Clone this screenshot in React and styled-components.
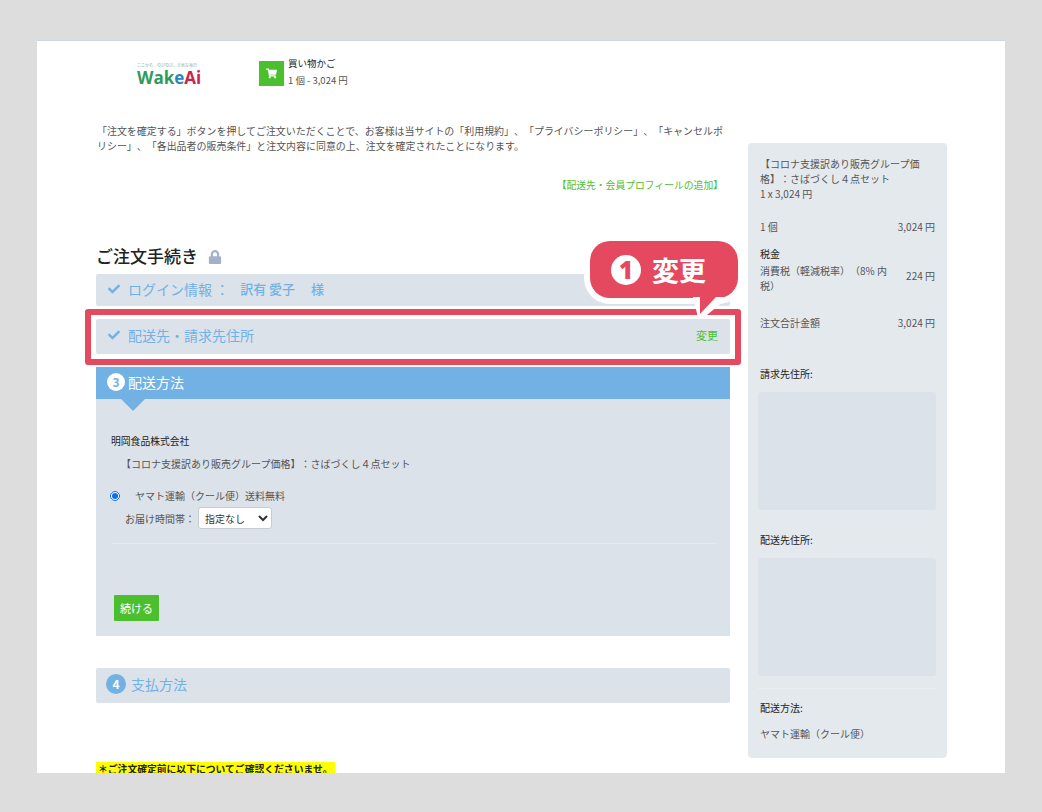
import { createGlobalStyle, styled } from "styled-components";
import { FaCheck, FaLock, FaShoppingCart } from "react-icons/fa";

const GlobalStyle = createGlobalStyle`
    html, body {
        margin: 0;
        padding: 0;
        background: #dddddd;
    }
    body {
        font-family: "Noto Sans CJK JP", "Noto Sans", sans-serif;
        font-size: 10px;
        color: #555;
        text-spacing-trim: space-all;
    }
    p, h1, h2, h3 {
        margin: 0;
        font-weight: 400;
    }
`;

const Sheet = styled.div`
    width: 968px;
    height: 733px;
    margin: 40px 0 39px 37px;
    padding-left: 59px;
    box-sizing: border-box;
    background: #fff;
    border-top: 1px solid #ccd6dd;
    overflow: hidden;
    display: flex;
    align-items: flex-start;
    gap: 18px;
`;

const Main = styled.div`
    width: 634px;
    flex-shrink: 0;
`;

const Header = styled.div`
    display: flex;
    align-items: flex-start;
    padding-top: 20px;
    height: 62px;
`;

const Logo = styled.div`
    width: 163px;
    padding: 2px 0 0 41px;
    box-sizing: border-box;
    .tag {
        display: block;
        height: 6px;
        font-size: 4px;
        line-height: 5px;
        color: #8a9;
        white-space: nowrap;
    }
    .name {
        display: block;
        font-family: "Open Sans", sans-serif;
        font-size: 17px;
        line-height: 18px;
        font-weight: 700;
        color: #2f9b5c;
    }
    .e { color: #2a86c0; }
    .ai { color: #c9264f; }
`;

const CartIcon = styled.div`
    width: 25px;
    height: 25px;
    background: #4cbf2f;
    color: #fff;
    display: flex;
    align-items: center;
    justify-content: center;
    font-size: 11px;
`;

const CartText = styled.div`
    margin-left: 4px;
    margin-top: -6px;
    font-size: 9.5px;
    line-height: 17px;
    strong {
        display: block;
        font-weight: 400;
        color: #222;
    }
`;

const Notice = styled.p`
    font-size: 9.96px;
    line-height: 15px;
    padding-left: 1px;
    width: 632px;
`;

const ProfileLink = styled.a`
    display: block;
    margin-top: 25px;
    padding-right: 7px;
    text-align: right;
    font-size: 9.8px;
    line-height: 15px;
    color: #4cbf2f;
`;

const Title = styled.h1`
    display: flex;
    align-items: center;
    gap: 10px;
    margin-top: 50px;
    height: 25px;
    font-size: 17px;
    line-height: 25px;
    font-weight: 500 !important;
    color: #222;
    svg {
        color: #a3b2c7;
        font-size: 14px;
        margin-top: 3px;
    }
`;

const Row = styled.div`
    position: relative;
    display: flex;
    align-items: center;
    box-sizing: border-box;
    height: ${(p) => p.$height}px;
    margin-top: ${(p) => p.$top}px;
    padding: 0 12px 3px;
    background: #dce2ea;
    border-radius: 2px;
    color: #72b1e4;
    font-size: 14px;
    svg {
        font-size: 12px;
        margin-right: 8px;
    }
    em {
        font-style: normal;
        font-weight: 500;
        font-size: 13px;
        margin-left: 11px;
    }
`;

const ChangeLink = styled.a`
    margin-left: auto;
    color: #4cbf2f;
    font-size: 11px;
`;

const Highlight = styled.div`
    position: absolute;
    left: -11px;
    right: -11px;
    top: -10px;
    bottom: -11px;
    border: 6px solid #e5495f;
    border-radius: 3px;
    pointer-events: none;
`;

const Callout = styled.div`
    position: absolute;
    right: -8px;
    top: -78px;
    width: 148px;
    height: 57px;
    box-sizing: border-box;
    padding-left: 21px;
    display: flex;
    align-items: center;
    gap: 11px;
    background: #e5495f;
    border-radius: 20px;
    box-shadow: 0 0 0 6px #fff;
    color: #fff;
    font-size: 27px;
    font-weight: 700;
    z-index: 2;
    &::before,
    &::after {
        content: "";
        position: absolute;
    }
    &::before {
        left: 103px;
        top: 56px;
        width: 36px;
        height: 22px;
        background: #fff;
        clip-path: polygon(0 0, 100% 0, 25% 100%, 15% 100%);
    }
    &::after {
        left: 110px;
        top: 56px;
        width: 16px;
        height: 17px;
        background: #e5495f;
        clip-path: polygon(0 0, 100% 0, 0 100%);
    }
`;

const CalloutNumber = styled.span`
    width: 30px;
    height: 30px;
    border-radius: 50%;
    background: #fff;
    color: #e5495f;
    font-family: "Open Sans", sans-serif;
    font-size: 24px;
    line-height: 30px;
    font-weight: 800;
    text-align: center;
`;

const StepHeader = styled.div`
    position: relative;
    display: flex;
    align-items: center;
    box-sizing: border-box;
    height: 32px;
    margin-top: 13px;
    padding: 0 0 3px 11px;
    background: #72b1e4;
    color: #fff;
    font-size: 14px;
    &::after {
        content: "";
        position: absolute;
        left: 25px;
        bottom: -12px;
        border-style: solid;
        border-width: 12px 12px 0;
        border-color: #72b1e4 transparent transparent;
    }
`;

const StepNumber = styled.span`
    width: ${(p) => (p.$muted ? 20 : 18)}px;
    height: ${(p) => (p.$muted ? 20 : 18)}px;
    margin-right: ${(p) => (p.$muted ? 5 : 3)}px;
    margin-left: ${(p) => (p.$muted ? -2 : 0)}px;
    border-radius: 50%;
    background: ${(p) => (p.$muted ? "#72b1e4" : "#fff")};
    color: ${(p) => (p.$muted ? "#fff" : "#72b1e4")};
    font-size: 12px;
    font-weight: 700;
    line-height: ${(p) => (p.$muted ? 20 : 18)}px;
    text-align: center;
`;

const StepBody = styled.div`
    height: 237px;
    box-sizing: border-box;
    padding: 35px 13px 0 15px;
    background: #dce2ea;
    color: #555;
`;

const Company = styled.p`
    font-size: 9.8px;
    line-height: 15px;
    color: #222;
`;

const Product = styled.p`
    line-height: 15px;
    margin: 7px 0 0 10px;
`;

const ShippingOption = styled.label`
    display: flex;
    align-items: center;
    margin-top: 17px;
    line-height: 15px;
    input {
        width: 10px;
        height: 10px;
        margin: 0 15px 0 -1px;
        accent-color: #0b6ef0;
    }
`;

const TimeRow = styled.div`
    display: flex;
    align-items: center;
    gap: 3px;
    margin: 4px 0 0 14px;
`;

const TimeSelect = styled.select`
    width: 74px;
    height: 22px;
    padding: 0 0 0 2px;
    border: 1px solid #c6ccd4;
    border-radius: 3px;
    background-color: #fff;
    font-family: inherit;
    font-size: 10px;
    color: #333;
`;

const Rule = styled.hr`
    margin: 14px 0 0 0;
    border: 0;
    border-top: 1px solid #e4e9ee;
`;

const NextButton = styled.button`
    display: block;
    width: 45px;
    height: 26px;
    margin: 51px 0 0 3px;
    padding: 0;
    border: 0;
    border-radius: 1px;
    background: #4cbf2f;
    color: #fff;
    font-family: inherit;
    font-size: 11px;
`;

const WarningLine = styled.p`
    display: inline-block;
    margin-top: 59px;
    padding: 0 2px;
    background: #ffff00;
    color: #222;
    font-weight: 700;
    font-size: 9.8px;
    line-height: 15px;
`;

const Sidebar = styled.aside`
    width: 199px;
    height: 615px;
    flex-shrink: 0;
    margin-top: 102px;
    padding: 13px 12px 0 12px;
    box-sizing: border-box;
    background: #e4e9ee;
    border-radius: 4px;
    line-height: 15px;
`;

const Line = styled.div`
    display: flex;
    align-items: ${(p) => (p.$raised ? "flex-start" : "center")};
    justify-content: space-between;
    margin-top: ${(p) => p.$top || 0}px;
    span:first-child {
        max-width: 130px;
    }
    span:last-child {
        margin-top: ${(p) => (p.$raised ? 5 : 0)}px;
    }
`;

const Label = styled.p`
    margin-top: ${(p) => p.$top}px;
    color: #222;
`;

const ShippingName = styled.p`
    margin-top: 11px;
`;

const AddressBox = styled.div`
    height: 118px;
    margin: 11px -1px 0 -2px;
    background: #dce2ea;
    border-radius: 3px;
`;

const SideRule = styled.hr`
    margin: 12px -1px 0 -2px;
    border: 0;
    border-top: 1px solid #eaeef2;
`;

export default function App() {
    return (
        <>
            <GlobalStyle />
            <Sheet>
                <Main>
                    <Header>
                        <Logo>
                            <span className="tag">ここから、のびのび。元気な毎日</span>
                            <span className="name">
                                Wak<span className="e">e</span>
                                <span className="ai">Ai</span>
                            </span>
                        </Logo>
                        <CartIcon>
                            <FaShoppingCart />
                        </CartIcon>
                        <CartText>
                            <strong>買い物かご</strong>1 個 - 3,024 円
                        </CartText>
                    </Header>
                    <Notice>
                        「注文を確定する」ボタンを押してご注文いただくことで、お客様は当サイトの「利用規約」、「プライバシーポリシー」、「キャンセルポリシー」、「各出品者の販売条件」と注文内容に同意の上、注文を確定されたことになります。
                    </Notice>
                    <ProfileLink>【配送先・会員プロフィールの追加】</ProfileLink>
                    <Title>
                        ご注文手続き
                        <FaLock />
                    </Title>
                    <Row $height={32} $top={6}>
                        <FaCheck />
                        ログイン情報 ：<em>訳有 愛子 　様</em>
                    </Row>
                    <Row $height={35} $top={13}>
                        <FaCheck />
                        配送先・請求先住所
                        <ChangeLink>変更</ChangeLink>
                        <Highlight />
                        <Callout>
                            <CalloutNumber>1</CalloutNumber>
                            変更
                        </Callout>
                    </Row>
                    <StepHeader>
                        <StepNumber>3</StepNumber>
                        配送方法
                    </StepHeader>
                    <StepBody>
                        <Company>明岡食品株式会社</Company>
                        <Product>【コロナ支援訳あり販売グループ価格】：さばづくし４点セット</Product>
                        <ShippingOption>
                            <input type="radio" defaultChecked name="shipping" />
                            ヤマト運輸（クール便）送料無料
                        </ShippingOption>
                        <TimeRow>
                            お届け時間帯：
                            <TimeSelect defaultValue="none">
                                <option value="none">指定なし</option>
                            </TimeSelect>
                        </TimeRow>
                        <Rule />
                        <NextButton>続ける</NextButton>
                    </StepBody>
                    <Row $height={35} $top={32}>
                        <StepNumber $muted>4</StepNumber>
                        支払方法
                    </Row>
                    <WarningLine>＊ご注文確定前に以下についてご確認くださいませ。</WarningLine>
                </Main>
                <Sidebar>
                    <p>【コロナ支援訳あり販売グループ価格】：さばづくし４点セット</p>
                    <p>1 x 3,024 円</p>
                    <Line $top={18}>
                        <span>1 個</span>
                        <span>3,024 円</span>
                    </Line>
                    <Label $top={12}>税金</Label>
                    <Line $top={2} $raised>
                        <span>消費税（軽減税率）（8% 内税）</span>
                        <span>224 円</span>
                    </Line>
                    <Line $top={22}>
                        <span>注文合計金額</span>
                        <span>3,024 円</span>
                    </Line>
                    <Label $top={36}>請求先住所:</Label>
                    <AddressBox />
                    <Label $top={22}>配送先住所:</Label>
                    <AddressBox />
                    <SideRule />
                    <Label $top={11}>配送方法:</Label>
                    <ShippingName>ヤマト運輸（クール便）</ShippingName>
                </Sidebar>
            </Sheet>
        </>
    );
}
